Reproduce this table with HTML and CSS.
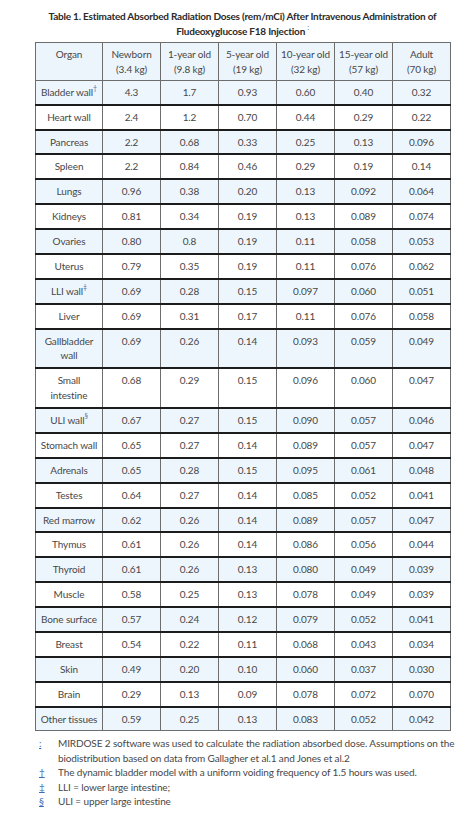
FILE: index.html
```html
<!DOCTYPE html>
<html>
<head>
<meta charset="utf-8">
<link rel="stylesheet" href="styles.css">
</head>
<body>
<div class="wrap">
  <h1 class="title">Table 1. Estimated Absorbed Radiation Doses (rem/mCi) After Intravenous Administration of Fludeoxyglucose F18 Injection <sup class="ref">:</sup></h1>
  <table class="doses">
    <colgroup>
      <col class="c-organ"><col class="c-val"><col class="c-val"><col class="c-val"><col class="c-val"><col class="c-val"><col class="c-val">
    </colgroup>
    <thead>
      <tr><th>Organ</th><th>Newborn<br>(3.4 kg)</th><th>1-year old<br>(9.8 kg)</th><th>5-year old<br>(19 kg)</th><th>10-year old<br>(32 kg)</th><th>15-year old<br>(57 kg)</th><th>Adult<br>(70 kg)</th></tr>
    </thead>
    <tbody>
      <tr><td>Bladder wall<sup class="ref">†</sup></td><td>4.3</td><td>1.7</td><td>0.93</td><td>0.60</td><td>0.40</td><td>0.32</td></tr>
      <tr><td>Heart wall</td><td>2.4</td><td>1.2</td><td>0.70</td><td>0.44</td><td>0.29</td><td>0.22</td></tr>
      <tr><td>Pancreas</td><td>2.2</td><td>0.68</td><td>0.33</td><td>0.25</td><td>0.13</td><td>0.096</td></tr>
      <tr><td>Spleen</td><td>2.2</td><td>0.84</td><td>0.46</td><td>0.29</td><td>0.19</td><td>0.14</td></tr>
      <tr><td>Lungs</td><td>0.96</td><td>0.38</td><td>0.20</td><td>0.13</td><td>0.092</td><td>0.064</td></tr>
      <tr><td>Kidneys</td><td>0.81</td><td>0.34</td><td>0.19</td><td>0.13</td><td>0.089</td><td>0.074</td></tr>
      <tr><td>Ovaries</td><td>0.80</td><td>0.8</td><td>0.19</td><td>0.11</td><td>0.058</td><td>0.053</td></tr>
      <tr><td>Uterus</td><td>0.79</td><td>0.35</td><td>0.19</td><td>0.11</td><td>0.076</td><td>0.062</td></tr>
      <tr><td>LLI wall<sup class="ref">‡</sup></td><td>0.69</td><td>0.28</td><td>0.15</td><td>0.097</td><td>0.060</td><td>0.051</td></tr>
      <tr><td>Liver</td><td>0.69</td><td>0.31</td><td>0.17</td><td>0.11</td><td>0.076</td><td>0.058</td></tr>
      <tr><td>Gallbladder<br>wall</td><td>0.69</td><td>0.26</td><td>0.14</td><td>0.093</td><td>0.059</td><td>0.049</td></tr>
      <tr><td>Small<br>intestine</td><td>0.68</td><td>0.29</td><td>0.15</td><td>0.096</td><td>0.060</td><td>0.047</td></tr>
      <tr><td>ULI wall<sup class="ref">§</sup></td><td>0.67</td><td>0.27</td><td>0.15</td><td>0.090</td><td>0.057</td><td>0.046</td></tr>
      <tr><td>Stomach wall</td><td>0.65</td><td>0.27</td><td>0.14</td><td>0.089</td><td>0.057</td><td>0.047</td></tr>
      <tr><td>Adrenals</td><td>0.65</td><td>0.28</td><td>0.15</td><td>0.095</td><td>0.061</td><td>0.048</td></tr>
      <tr><td>Testes</td><td>0.64</td><td>0.27</td><td>0.14</td><td>0.085</td><td>0.052</td><td>0.041</td></tr>
      <tr><td>Red marrow</td><td>0.62</td><td>0.26</td><td>0.14</td><td>0.089</td><td>0.057</td><td>0.047</td></tr>
      <tr><td>Thymus</td><td>0.61</td><td>0.26</td><td>0.14</td><td>0.086</td><td>0.056</td><td>0.044</td></tr>
      <tr><td>Thyroid</td><td>0.61</td><td>0.26</td><td>0.13</td><td>0.080</td><td>0.049</td><td>0.039</td></tr>
      <tr><td>Muscle</td><td>0.58</td><td>0.25</td><td>0.13</td><td>0.078</td><td>0.049</td><td>0.039</td></tr>
      <tr><td>Bone surface</td><td>0.57</td><td>0.24</td><td>0.12</td><td>0.079</td><td>0.052</td><td>0.041</td></tr>
      <tr><td>Breast</td><td>0.54</td><td>0.22</td><td>0.11</td><td>0.068</td><td>0.043</td><td>0.034</td></tr>
      <tr><td>Skin</td><td>0.49</td><td>0.20</td><td>0.10</td><td>0.060</td><td>0.037</td><td>0.030</td></tr>
      <tr><td>Brain</td><td>0.29</td><td>0.13</td><td>0.09</td><td>0.078</td><td>0.072</td><td>0.070</td></tr>
      <tr><td>Other tissues</td><td>0.59</td><td>0.25</td><td>0.13</td><td>0.083</td><td>0.052</td><td>0.042</td></tr>
    </tbody>
  </table>
  <ul class="notes">
    <li><span class="mark">:</span><span class="text">MIRDOSE 2 software was used to calculate the radiation absorbed dose. Assumptions on the biodistribution based on data from Gallagher et al.1 and Jones et al.2</span></li>
    <li><span class="mark">†</span><span class="text">The dynamic bladder model with a uniform voiding frequency of 1.5 hours was used.</span></li>
    <li><span class="mark">‡</span><span class="text">LLI = lower large intestine;</span></li>
    <li><span class="mark">§</span><span class="text">ULI = upper large intestine</span></li>
  </ul>
</div>
</body>
</html>
```
FILE: styles.css
```css
html, body {
  margin: 0;
  padding: 0;
  background: #ffffff;
}
body {
  font-family: Lato, "Open Sans", sans-serif;
  color: #474747;
  font-size: 10px;
  letter-spacing: -0.12px;
}
.wrap {
  width: 415px;
  margin-left: 35px;
  padding-top: 9px;
}
.title {
  margin: 0 -20px 3px -20px;
  font-size: 10px;
  letter-spacing: -0.22px;
  line-height: 15px;
  font-weight: 700;
  text-align: center;
  color: #2a2a2a;
}
.ref {
  color: #3b6cb5;
  font-size: 7px;
  vertical-align: top;
  line-height: 0;
  position: relative;
  top: 3px;
  font-weight: 400;
}
.doses {
  width: 415px;
  border-collapse: collapse;
  table-layout: fixed;
  border: 1px solid #6d6d6d;
}
.c-organ { width: 67px; }
.c-val { width: 58px; }
.doses th, .doses td {
  border-left: 1px solid #6d6d6d;
  border-right: 1px solid #6d6d6d;
  padding: 4px 1px;
  line-height: 14.88px;
  text-align: center;
  vertical-align: top;
  font-weight: 400;
  white-space: nowrap;
}
.doses thead th {
  background: #ecf5fc;
  border-bottom: 1px solid #6d6d6d;
  padding-top: 4px;
  padding-bottom: 3px;
}
.doses tbody tr:nth-child(odd) td {
  background: #eef6fd;
}
.doses tbody tr td {
  border-bottom: 2px solid #1c1c1c;
}
.doses tbody tr:last-child td {
  border-bottom: 1px solid #6d6d6d;
}
.notes {
  list-style: none;
  margin: 5px -10px 0 0;
  padding: 0;
}
.notes li {
  display: flex;
  line-height: 14.5px;
}
.mark {
  width: 23px;
  flex: none;
  color: #3b6cb5;
  text-decoration: underline;
  padding-left: 4px;
  box-sizing: border-box;
}
.text {
  flex: 1;
}
```
